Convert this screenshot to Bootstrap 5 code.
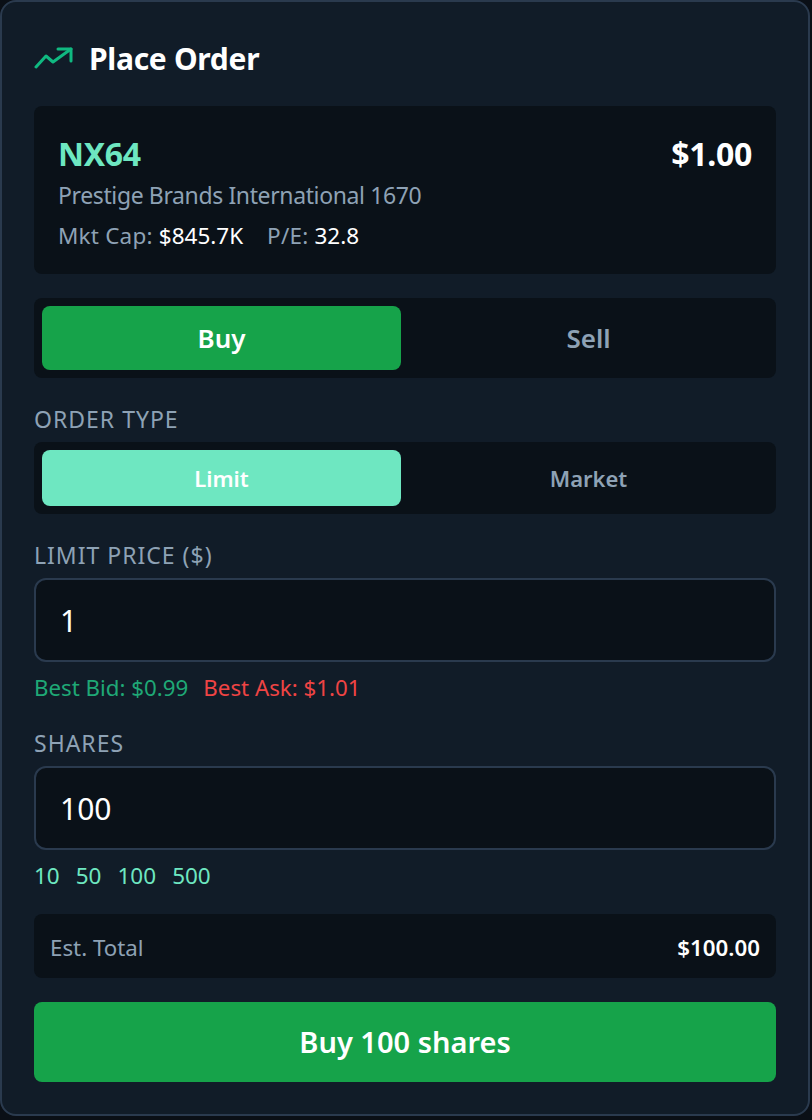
<!DOCTYPE html>
<html lang="en">
<head>
<meta charset="utf-8">
<title>Place Order</title>
<link rel="stylesheet" href="https://cdn.jsdelivr.net/npm/bootstrap@5.3.0/dist/css/bootstrap.min.css">
<style>
html, body { background: #0a0f16; height: 1120px; overflow: hidden; }
body { font-family: "Noto Sans", "Open Sans", sans-serif; color: #fff; }
.order-panel { width: 810px; height: 1116px; background: #111c28; border: 2px solid #2a3a4e; border-radius: 16px; padding: 32px; }
.order-title { font-size: 30px; font-weight: 700; line-height: 48px; height: 48px; margin: 0 0 24px; padding-top: 2px; letter-spacing: -.3px; }
.trend-ico { width: 40px; height: 24px; margin-right: 16px; flex: none; margin-left: -1px; }
.dark-box { background: #0a1118; border-radius: 8px; }
.stock-box { height: 168px; padding: 24px; margin-bottom: 24px; }
.sym { font-size: 32px; font-weight: 700; line-height: 48px; color: #6ee7c1; letter-spacing: -.3px; }
.px { font-size: 32px; font-weight: 700; line-height: 48px; letter-spacing: -.3px; }
.co-name { font-size: 23px; line-height: 34px; padding-bottom: 2px; color: #8ea2b5; letter-spacing: -.38px; }
.stats { font-size: 22.5px; line-height: 44px; color: #8ea2b5; gap: 24px; letter-spacing: .2px; }
.stats b { font-weight: 400; color: #fff; letter-spacing: 0; }
.seg { padding: 8px; gap: 8px; }
.seg-side { height: 80px; margin-bottom: 24px; }
.seg-type { height: 72px; margin-bottom: 24px; }
.seg-btn { flex: 1 1 0; border: 0; border-radius: 8px; background: transparent; color: #8ea2b5; font-weight: 600; padding: 0; }
.seg-side .seg-btn { font-size: 26px; }
.seg-type .seg-btn { font-size: 22px; }
.seg-btn.on-buy { background: #16a34a; color: #fff; }
.seg-btn.on-type { background: #6ee7c1; color: #fff; }
.fld-label { display: block; font-size: 23px; line-height: 34px; letter-spacing: 1px; color: #8ea2b5; margin-bottom: 6px; }
.num-input.form-control { height: 84px; background: #0a1118; border: 2px solid #2a3a4e; border-radius: 12px; color: #fff; font-size: 30px; padding: 0 24px; box-shadow: none; }
.hints { font-size: 22.3px; line-height: 32px; gap: 15px; margin-top: 10px; margin-bottom: 22px; }
.bid { color: #1fa876; }
.ask { color: #ef4444; }
.chips { font-size: 22.5px; line-height: 32px; gap: 16px; color: #6ee7c1; margin-top: 10px; margin-bottom: 22px; }
.total-box { height: 64px; padding: 3px 16px 0; margin-bottom: 24px; }
.total-lbl { font-size: 22.3px; color: #8ea2b5; }
.total-val { font-size: 22.3px; font-weight: 600; }
.go-btn.btn { width: 100%; height: 80px; background: #16a34a; border: 0; border-radius: 8px; color: #fff; font-size: 29px; font-weight: 600; padding: 0; }
</style>
</head>
<body>
<div class="order-panel">
  <h2 class="order-title d-flex align-items-center">
    <svg class="trend-ico" viewBox="0 0 40 24" fill="none" stroke="#10b981" stroke-width="3" stroke-linecap="round" stroke-linejoin="round" aria-hidden="true"><path d="M3 20 L13 9 L20 15 L38 2"/><path d="M25 2 H38 V14"/></svg>
    Place Order
  </h2>

  <div class="dark-box stock-box">
    <div class="d-flex justify-content-between align-items-center">
      <span class="sym">NX64</span>
      <span class="px">$1.00</span>
    </div>
    <div class="co-name">Prestige Brands International 1670</div>
    <div class="stats d-flex"><span>Mkt Cap: <b>$845.7K</b></span><span>P/E: <b>32.8</b></span></div>
  </div>

  <div class="dark-box seg seg-side d-flex">
    <button type="button" class="seg-btn on-buy">Buy</button>
    <button type="button" class="seg-btn">Sell</button>
  </div>

  <label class="fld-label">ORDER TYPE</label>
  <div class="dark-box seg seg-type d-flex">
    <button type="button" class="seg-btn on-type">Limit</button>
    <button type="button" class="seg-btn">Market</button>
  </div>

  <label class="fld-label">LIMIT PRICE ($)</label>
  <input class="form-control num-input" type="text" value="1">
  <div class="hints d-flex"><span class="bid">Best Bid: $0.99</span><span class="ask">Best Ask: $1.01</span></div>

  <label class="fld-label">SHARES</label>
  <input class="form-control num-input" type="text" value="100">
  <div class="chips d-flex"><span>10</span><span>50</span><span>100</span><span>500</span></div>

  <div class="dark-box total-box d-flex justify-content-between align-items-center">
    <span class="total-lbl">Est. Total</span>
    <span class="total-val">$100.00</span>
  </div>

  <button type="button" class="btn go-btn">Buy 100 shares</button>
</div>
<script src="https://cdn.jsdelivr.net/npm/bootstrap@5.3.0/dist/js/bootstrap.bundle.min.js"></script>
</body>
</html>
